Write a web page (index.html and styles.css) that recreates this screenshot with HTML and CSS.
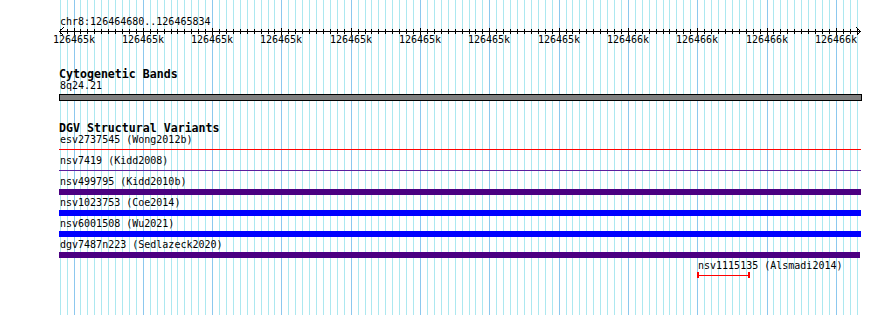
FILE: index.html
```html
<!DOCTYPE html>
<html>
<head>
  <title>chr8:126464680..126465834</title>
  <link rel="stylesheet" href="styles.css">
</head>
<body>
  <div class="panel">
    <svg class="grid" id="grid" width="890" height="315"></svg>

    <div class="tracks">
      <svg class="ruler" id="ruler" width="890" height="50">
        <text class="ruler-name" x="60" y="25">chr8:126464680..126465834</text>
        <line class="ruler-axis" x1="59" y1="31.5" x2="861" y2="31.5"></line>
        <polyline class="ruler-axis" points="63.5,27.5 59.5,31.5 63.5,35.5"></polyline>
        <polyline class="ruler-axis" points="856.5,27.5 860.5,31.5 856.5,35.5"></polyline>
        <g id="ticks"></g>
        <g class="ruler-labels" id="labels"></g>
      </svg>

      <div class="track">
        <h2 class="track-title">Cytogenetic Bands</h2>
        <div class="feature">
          <div class="feature-label">8q24.21</div>
          <div class="band-cyto"></div>
        </div>
      </div>

      <div class="track track-dgv">
        <h2 class="track-title">DGV Structural Variants</h2>
        <div class="feature">
          <div class="feature-label">esv2737545 (Wong2012b)</div>
          <div class="glyph glyph-thin"><div class="glyph-line line-red"></div></div>
        </div>
        <div class="feature">
          <div class="feature-label">nsv7419 (Kidd2008)</div>
          <div class="glyph glyph-thin"><div class="glyph-line line-purple"></div></div>
        </div>
        <div class="feature">
          <div class="feature-label">nsv499795 (Kidd2010b)</div>
          <div class="glyph bar-indigo"></div>
        </div>
        <div class="feature">
          <div class="feature-label">nsv1023753 (Coe2014)</div>
          <div class="glyph bar-blue"></div>
        </div>
        <div class="feature">
          <div class="feature-label">nsv6001508 (Wu2021)</div>
          <div class="glyph bar-blue"></div>
        </div>
        <div class="feature">
          <div class="feature-label">dgv7487n223 (Sedlazeck2020)</div>
          <div class="glyph bar-indigo bar-short"></div>
        </div>
        <div class="feature feature-small">
          <div class="feature-label">nsv1115135 (Alsmadi2014)</div>
          <div class="glyph-span"><div class="glyph-line line-red"></div></div>
        </div>
      </div>
    </div>
  </div>

  <script>
    // grid lines + ruler ticks, 6.93px per minor step, major every 10
    var ns = "http://www.w3.org/2000/svg";
    var grid = document.getElementById("grid");
    var ticks = document.getElementById("ticks");
    var labels = document.getElementById("labels");

    for (var i = -2; i <= 113; i++) {
      var x = Math.floor(74 + i * 6.93) + 0.5;
      var major = (i >= 0 && i % 10 === 0);

      var gl = document.createElementNS(ns, "line");
      gl.setAttribute("x1", x);
      gl.setAttribute("x2", x);
      gl.setAttribute("y1", 0);
      gl.setAttribute("y2", 315);
      gl.setAttribute("class", major ? "grid-major" : "grid-minor");
      grid.appendChild(gl);

      var t = document.createElementNS(ns, "line");
      t.setAttribute("x1", x);
      t.setAttribute("x2", x);
      t.setAttribute("y1", major ? 28 : 29);
      t.setAttribute("y2", major ? 35 : 34);
      t.setAttribute("class", "ruler-axis");
      ticks.appendChild(t);

      if (major) {
        var label = document.createElementNS(ns, "text");
        label.setAttribute("x", x - 0.5);
        label.setAttribute("y", 43);
        label.textContent = i < 80 ? "126465k" : "126466k";
        labels.appendChild(label);
      }
    }
  </script>
</body>
</html>
```

FILE: styles.css
```css
/* page */
body {
  margin: 0;
  background: #ffffff;
  font-family: "DejaVu Sans Mono", "Liberation Mono", monospace;
  color: #000000;
}

.panel {
  position: relative;
  width: 890px;
  height: 315px;
  overflow: hidden;
}

/* background grid */
.grid {
  position: absolute;
  top: 0;
  left: 0;
  shape-rendering: crispEdges;
}

.grid-minor {
  stroke: #ace8f0;
  stroke-width: 1;
}

.grid-major {
  stroke: #8cc8ee;
  stroke-width: 1;
}

.tracks {
  position: relative;
}

/* ruler */
.ruler {
  display: block;
}

.ruler text {
  font-family: "DejaVu Sans Mono", monospace;
  font-size: 10px;
  fill: #000000;
}

.ruler-labels text {
  text-anchor: middle;
}

.ruler-axis {
  stroke: #000000;
  stroke-width: 1;
  fill: none;
  shape-rendering: crispEdges;
}

/* tracks */
.track {
  padding-left: 59px;
  margin-top: 18px;
}

.track-dgv {
  margin-top: 21px;
}

.track-title {
  margin: 0;
  font-size: 11.6px;
  line-height: 12px;
  font-weight: bold;
}

.feature-label {
  font-size: 10px;
  line-height: 12px;
  padding-left: 1px;
  white-space: nowrap;
}

.band-cyto {
  width: 801px;
  height: 5px;
  margin-top: 2px;
  border: 1px solid #000000;
  background: #808080;
}

.glyph {
  width: 802px;
  height: 6px;
  margin-top: 1px;
  margin-bottom: 2px;
}

.glyph-thin {
  box-sizing: border-box;
  padding-top: 2px;
}

.glyph-line {
  height: 1px;
}

.line-red {
  background: #ff0000;
}

.line-purple {
  background: #5a1e9e;
}

.bar-indigo {
  background: #4b0082;
}

.bar-blue {
  background: #0000ff;
}

.bar-short {
  width: 801px;
}

/* short feature at the right */
.feature-small {
  margin-left: 638px;
  margin-top: 1px;
}

.glyph-span {
  width: 49px;
  height: 3px;
  padding-top: 3px;
  border-left: 2px solid #ff0000;
  border-right: 2px solid #ff0000;
}
```
